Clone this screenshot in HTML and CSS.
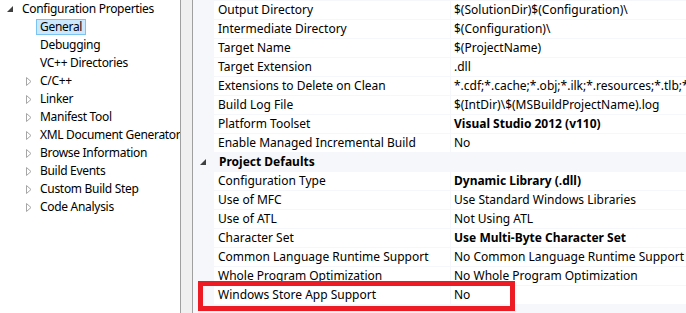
FILE: index.html
```html
<!DOCTYPE html>
<html lang="en">
<head>
    <meta charset="UTF-8">
    <title>Property Pages</title>
    <link rel="stylesheet" href="styles.css">
</head>
<body>
    <div class="page">
        <ul class="tree">
            <li class="node top">
                <span class="arrow"><svg width="6" height="6" viewBox="0 0 6 6"><polygon points="6,0 6,6 0,6" fill="#404040"/></svg></span>
                <span class="label">Configuration Properties</span>
            </li>
            <li class="node"><span class="arrow"></span><span class="label selected">General</span></li>
            <li class="node"><span class="arrow"></span><span class="label">Debugging</span></li>
            <li class="node"><span class="arrow"></span><span class="label">VC++ Directories</span></li>
            <li class="node"><span class="arrow"><svg width="6" height="9" viewBox="0 0 6 9"><polygon points="0.5,0.5 5,4.5 0.5,8.5" fill="none" stroke="#a6a6a6"/></svg></span><span class="label">C/C++</span></li>
            <li class="node"><span class="arrow"><svg width="6" height="9" viewBox="0 0 6 9"><polygon points="0.5,0.5 5,4.5 0.5,8.5" fill="none" stroke="#a6a6a6"/></svg></span><span class="label">Linker</span></li>
            <li class="node"><span class="arrow"><svg width="6" height="9" viewBox="0 0 6 9"><polygon points="0.5,0.5 5,4.5 0.5,8.5" fill="none" stroke="#a6a6a6"/></svg></span><span class="label">Manifest Tool</span></li>
            <li class="node"><span class="arrow"><svg width="6" height="9" viewBox="0 0 6 9"><polygon points="0.5,0.5 5,4.5 0.5,8.5" fill="none" stroke="#a6a6a6"/></svg></span><span class="label">XML Document Generator</span></li>
            <li class="node"><span class="arrow"><svg width="6" height="9" viewBox="0 0 6 9"><polygon points="0.5,0.5 5,4.5 0.5,8.5" fill="none" stroke="#a6a6a6"/></svg></span><span class="label">Browse Information</span></li>
            <li class="node"><span class="arrow"><svg width="6" height="9" viewBox="0 0 6 9"><polygon points="0.5,0.5 5,4.5 0.5,8.5" fill="none" stroke="#a6a6a6"/></svg></span><span class="label">Build Events</span></li>
            <li class="node"><span class="arrow"><svg width="6" height="9" viewBox="0 0 6 9"><polygon points="0.5,0.5 5,4.5 0.5,8.5" fill="none" stroke="#a6a6a6"/></svg></span><span class="label">Custom Build Step</span></li>
            <li class="node"><span class="arrow"><svg width="6" height="9" viewBox="0 0 6 9"><polygon points="0.5,0.5 5,4.5 0.5,8.5" fill="none" stroke="#a6a6a6"/></svg></span><span class="label">Code Analysis</span></li>
        </ul>

        <div class="splitter"></div>

        <div class="grid">
            <div class="row"><div class="name">Output Directory</div><div class="value">$(SolutionDir)$(Configuration)\</div></div>
            <div class="row"><div class="name">Intermediate Directory</div><div class="value">$(Configuration)\</div></div>
            <div class="row"><div class="name">Target Name</div><div class="value">$(ProjectName)</div></div>
            <div class="row"><div class="name">Target Extension</div><div class="value">.dll</div></div>
            <div class="row"><div class="name">Extensions to Delete on Clean</div><div class="value">*.cdf;*.cache;*.obj;*.ilk;*.resources;*.tlb;*.tli;*</div></div>
            <div class="row"><div class="name">Build Log File</div><div class="value">$(IntDir)\$(MSBuildProjectName).log</div></div>
            <div class="row"><div class="name">Platform Toolset</div><div class="value bold">Visual Studio 2012 (v110)</div></div>
            <div class="row"><div class="name">Enable Managed Incremental Build</div><div class="value">No</div></div>
            <div class="row category">
                <span class="arrow"><svg width="6" height="6" viewBox="0 0 6 6"><polygon points="6,0 6,6 0,6" fill="#404040"/></svg></span>
                <span class="cat-name">Project Defaults</span>
            </div>
            <div class="row"><div class="name">Configuration Type</div><div class="value bold">Dynamic Library (.dll)</div></div>
            <div class="row"><div class="name">Use of MFC</div><div class="value">Use Standard Windows Libraries</div></div>
            <div class="row"><div class="name">Use of ATL</div><div class="value">Not Using ATL</div></div>
            <div class="row"><div class="name">Character Set</div><div class="value bold">Use Multi-Byte Character Set</div></div>
            <div class="row"><div class="name">Common Language Runtime Support</div><div class="value">No Common Language Runtime Support</div></div>
            <div class="row"><div class="name">Whole Program Optimization</div><div class="value">No Whole Program Optimization</div></div>
            <div class="row"><div class="name">Windows Store App Support</div><div class="value">No</div></div>
        </div>

        <div class="highlight"></div>
    </div>
</body>
</html>
```

FILE: styles.css
```css
*{
    margin: 0;
    padding: 0;
    box-sizing: border-box;
}
body{
    font-family: "Noto Sans", "Open Sans", sans-serif;
    font-size: 12px;
    color: #000;
    background: #fff;
    overflow: hidden;
}
.page{
    width: 686px;
    height: 313px;
    display: flex;
    position: relative;
    overflow: hidden;
}

/* tree on the left */
.tree{
    list-style: none;
    width: 180px;
    flex-shrink: 0;
    letter-spacing: -0.3px;
}
.tree .node{
    height: 18px;
    display: flex;
    align-items: center;
    padding-left: 26px;
    white-space: nowrap;
}
.tree .node.top{
    padding-left: 7px;
}
.tree .arrow{
    width: 10px;
    flex-shrink: 0;
    display: flex;
    align-items: center;
}
.tree .top .arrow{
    width: 14px;
}
.tree .label{
    flex-shrink: 0;
    padding: 0 3px;
    border: 1px solid transparent;
    line-height: 14px;
}
.tree .top .label{
    padding-left: 0;
}
.tree .label.selected{
    background: #cce8ff;
    border-color: #7ac3f3;
}

/* splitter */
.splitter{
    width: 13px;
    flex-shrink: 0;
    background: #f0f0f0;
    border-left: 1px solid #a0a0a0;
    border-right: 1px solid #a0a0a0;
}

/* property grid */
.grid{
    flex: 1;
    background: #f5f7fb;
    padding-top: 1px;
    display: flex;
    flex-direction: column;
    gap: 1px;
    min-width: 0;
}
.row{
    height: 18px;
    display: grid;
    grid-template-columns: 236px 1fr;
    gap: 1px;
    padding-left: 21px;
    white-space: nowrap;
}
.row .name,
.row .value{
    background: #fff;
    line-height: 18px;
    overflow: hidden;
}
.row .name{
    padding-left: 4px;
}
.row .value{
    padding-left: 3px;
}
.bold{
    font-weight: bold;
}
.row.category{
    display: flex;
    align-items: center;
    padding-left: 7px;
}
.row.category .arrow{
    width: 18px;
    display: flex;
    align-items: center;
}
.cat-name{
    font-weight: bold;
    line-height: 18px;
}

/* red box drawn over the last row */
.highlight{
    position: absolute;
    left: 198px;
    top: 281px;
    width: 317px;
    height: 30px;
    border: 5px solid #ed1c24;
}
```
